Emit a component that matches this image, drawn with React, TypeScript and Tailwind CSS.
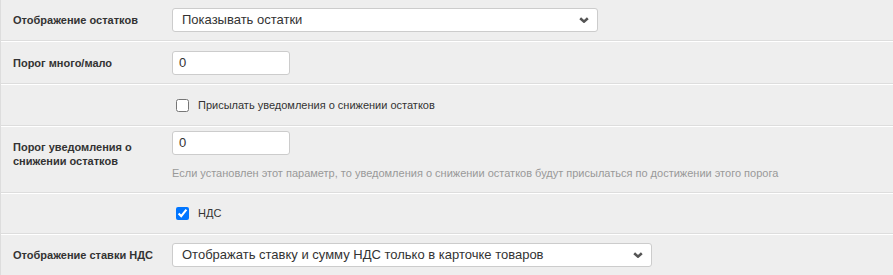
const LABEL = "w-[171px] shrink-0 pl-3 pr-3 text-[11px] font-bold leading-[14px] text-[#333]";

function Chevron() {
  return (
    <span className="flex h-[18px] w-[18px] items-center justify-center bg-white">
      <svg width="10" height="6" viewBox="0 0 10 6">
        <path d="M1.2 1.2 L5 4.6 L8.8 1.2" fill="none" stroke="#555" strokeWidth="2.6" />
      </svg>
    </span>
  );
}

function FakeSelect({ value, width }: { value: string; width: string }) {
  return (
    <div className={`flex h-[24px] items-center justify-between rounded-[3px] border border-[#cccccc] bg-white pl-[9px] pr-[4px] text-[13px] text-[#333] ${width}`}>
      <span>{value}</span>
      <Chevron />
    </div>
  );
}

function TextBox({ value }: { value: string }) {
  return (
    <div className="flex h-[24px] w-[118px] items-center rounded-[3px] border border-[#cccccc] bg-white px-[6px] text-[13px] text-[#333]">
      {value}
    </div>
  );
}

function Row({ children, className = "" }: { children: React.ReactNode; className?: string }) {
  return (
    <div className={`flex border-t border-t-white border-b border-b-[#dddddd] ${className}`}>{children}</div>
  );
}

export default function App() {
  return (
    <div
      className="h-[275px] w-[893px] overflow-hidden border-l border-l-[#dddddd] bg-[#eeeeee]"
      style={{ fontFamily: "Arial, 'Liberation Sans', sans-serif" }}
    >
      <div className="-mt-[2px]">
        <Row className="h-[43px] items-center pt-px">
          <div className={LABEL}>Отображение остатков</div>
          <FakeSelect value="Показывать остатки" width="w-[426px]" />
        </Row>
        <Row className="h-[43px] items-center">
          <div className={LABEL}>Порог много/мало</div>
          <TextBox value="0" />
        </Row>
        <Row className="h-[42px] items-center">
          <div className="w-[171px] shrink-0" />
          <label className="flex items-center gap-[9px] pl-[4px] text-[11px] text-[#333]">
            <input type="checkbox" className="m-0 h-[13px] w-[13px]" />
            Присылать уведомления о снижении остатков
          </label>
        </Row>
        <Row className="h-[67px] pt-[4px]">
          <div className={`${LABEL} pt-[9px]`}>
            Порог уведомления о
            <br />
            снижении остатков
          </div>
          <div className="flex flex-col">
            <TextBox value="0" />
            <div className="mt-[10px] text-[11px] text-[#999999]">
              Если установлен этот параметр, то уведомления о снижении остатков будут присылаться по достижении этого порога
            </div>
          </div>
        </Row>
        <Row className="h-[41px] items-center">
          <div className="w-[171px] shrink-0" />
          <label className="flex items-center gap-[9px] pl-[4px] text-[11px] text-[#333]">
            <input type="checkbox" defaultChecked className="m-0 h-[13px] w-[13px]" />
            НДС
          </label>
        </Row>
        <Row className="h-[42px] items-center">
          <div className={LABEL}>Отображение ставки НДС</div>
          <FakeSelect value="Отображать ставку и сумму НДС только в карточке товаров" width="w-[480px]" />
        </Row>
      </div>
    </div>
  );
}
